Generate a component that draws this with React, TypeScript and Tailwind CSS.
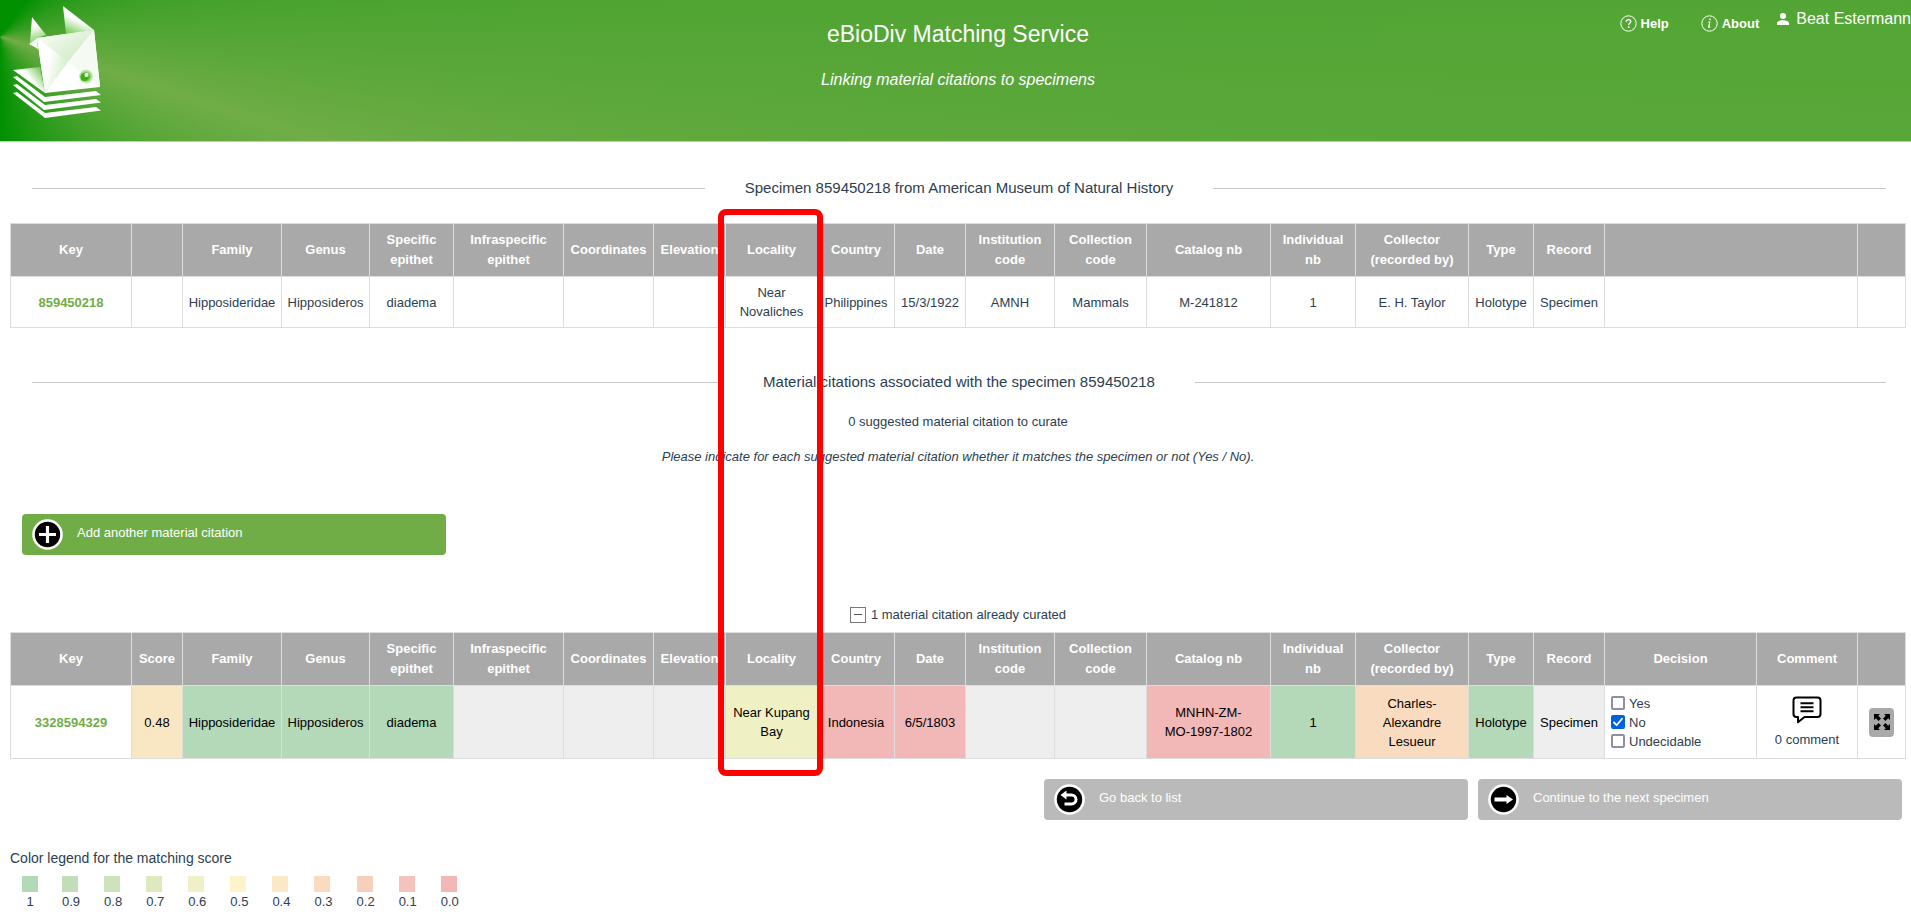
import { useState } from "react";
import type { ReactNode } from "react";

const COLUMN_WIDTHS = [
  121, 51, 99, 88, 84, 110, 90, 72, 92, 77, 71, 89, 92, 124, 85, 113, 65, 71, 152, 101, 48,
];

const SHARED_HEADS = [
  "Family",
  "Genus",
  "Specific epithet",
  "Infraspecific epithet",
  "Coordinates",
  "Elevation",
  "Locality",
  "Country",
  "Date",
  "Institution code",
  "Collection code",
  "Catalog nb",
  "Individual nb",
  "Collector (recorded by)",
  "Type",
  "Record",
];

const SPECIMEN = [
  "Hipposideridae",
  "Hipposideros",
  "diadema",
  "",
  "",
  "",
  "Near Novaliches",
  "Philippines",
  "15/3/1922",
  "AMNH",
  "Mammals",
  "M-241812",
  "1",
  "E. H. Taylor",
  "Holotype",
  "Specimen",
];

const CITATION: { text: string; tone: string }[] = [
  { text: "0.48", tone: "bg-[#f9e7c4]" },
  { text: "Hipposideridae", tone: "bg-[#b3d9b9]" },
  { text: "Hipposideros", tone: "bg-[#b3d9b9]" },
  { text: "diadema", tone: "bg-[#b3d9b9]" },
  { text: "", tone: "bg-[#eeeeee]" },
  { text: "", tone: "bg-[#eeeeee]" },
  { text: "", tone: "bg-[#eeeeee]" },
  { text: "Near Kupang Bay", tone: "bg-[#eff0c4]" },
  { text: "Indonesia", tone: "bg-[#f2b8b7]" },
  { text: "6/5/1803", tone: "bg-[#f2b8b7]" },
  { text: "", tone: "bg-[#eeeeee]" },
  { text: "", tone: "bg-[#eeeeee]" },
  { text: "MNHN-ZM-\nMO-1997-1802", tone: "bg-[#f2b8b7]" },
  { text: "1", tone: "bg-[#b3d9b9]" },
  { text: "Charles-\nAlexandre\nLesueur", tone: "bg-[#f9dcc0]" },
  { text: "Holotype", tone: "bg-[#b3d9b9]" },
  { text: "Specimen", tone: "bg-[#eeeeee]" },
];

const LEGEND = [
  { label: "1", tone: "bg-[#b3d9b9]" },
  { label: "0.9", tone: "bg-[#c1ddb9]" },
  { label: "0.8", tone: "bg-[#cee3ba]" },
  { label: "0.7", tone: "bg-[#dee9bf]" },
  { label: "0.6", tone: "bg-[#eff0c8]" },
  { label: "0.5", tone: "bg-[#fdf5c9]" },
  { label: "0.4", tone: "bg-[#fae8c6]" },
  { label: "0.3", tone: "bg-[#f9dcc0]" },
  { label: "0.2", tone: "bg-[#f7d0bd]" },
  { label: "0.1", tone: "bg-[#f4c4bc]" },
  { label: "0.0", tone: "bg-[#f2b8b7]" },
];

function Logo() {
  return (
    <svg width="110" height="124" viewBox="0 0 110 124" aria-hidden="true">
      <defs>
        <linearGradient id="earLeft" x1="0.3" y1="0" x2="0.5" y2="1">
          <stop offset="0.35" stopColor="#fff" />
          <stop offset="1" stopColor="#7fce5f" />
        </linearGradient>
        <linearGradient id="earRight" x1="0.6" y1="0.3" x2="0.25" y2="1">
          <stop offset="0.3" stopColor="#fff" />
          <stop offset="1" stopColor="#7fce5f" />
        </linearGradient>
        <linearGradient id="faceTop" x1="0" y1="0" x2="0.7" y2="0.6">
          <stop offset="0.3" stopColor="#f3faf0" />
          <stop offset="1" stopColor="#d9efcf" />
        </linearGradient>
        <linearGradient id="faceLeft" x1="0" y1="0.4" x2="0.8" y2="0.75">
          <stop offset="0.4" stopColor="#fff" />
          <stop offset="1" stopColor="#d9efcf" />
        </linearGradient>
        <linearGradient id="sheet" x1="0.2" y1="0.6" x2="0.95" y2="0.1">
          <stop offset="0.4" stopColor="#fff" />
          <stop offset="1" stopColor="#6cc44a" />
        </linearGradient>
        <radialGradient id="eye">
          <stop offset="0.5" stopColor="#5fc232" />
          <stop offset="0.7" stopColor="#a3dc88" />
          <stop offset="1" stopColor="#d5efc8" />
        </radialGradient>
      </defs>
      <path d="M32 17 46 35 37 38 30 43Z" fill="url(#earLeft)" />
      <path d="M63 6 94 30 66 34Z" fill="url(#earRight)" />
      <path d="M29 44 37 38 38 49Z" fill="#f4fbf1" />
      <path d="M13 70 40 67 45 93Z" fill="url(#sheet)" />
      <path d="M37 38 94 30 100 87 45 93Z" fill="#fff" />
      <path d="M37 38 94 30 68 62Z" fill="url(#faceTop)" />
      <path d="M37 38 68 62 45 93Z" fill="url(#faceLeft)" />
      <path d="M94 30 100 87 68 62Z" fill="#f5fbf2" />
      <circle cx="86" cy="76.500" r="7" fill="url(#eye)" />
      <circle cx="84.500" cy="77" r="4" fill="#3fae18" />
      <circle cx="86.500" cy="75" r="2" fill="#fff" />
      <path d="M13 77 17 76 45 97 96 91 101 95 44 102Z" fill="#fff" />
      <path d="M13 85 17 84 45 105 96 99 101 102.500 44 110Z" fill="#fff" />
      <path d="M13 93 17 92 45 113 96 107 101 110.500 45 118Z" fill="#fff" />
    </svg>
  );
}

function HelpIcon() {
  return (
    <svg width="17" height="17" viewBox="0 0 17 17" fill="none" stroke="#fff" aria-hidden="true">
      <circle cx="8.500" cy="8.500" r="7.700" strokeWidth="1" />
      <path d="M6.200 6.800C6.200 5.300 7.200 4.600 8.500 4.600S10.800 5.400 10.800 6.500C10.800 8 8.700 8.100 8.700 10" strokeWidth="1.300" />
      <path d="M8.700 11.300V12.900" strokeWidth="1.500" />
    </svg>
  );
}

function AboutIcon() {
  return (
    <svg width="17" height="17" viewBox="0 0 17 17" fill="none" stroke="#fff" aria-hidden="true">
      <circle cx="8.500" cy="8.500" r="7.700" strokeWidth="1" />
      <path d="M9.200 3.700 8.900 5.200" strokeWidth="1.500" />
      <path d="M7.300 7H8.800L7.700 12.200H9.200" strokeWidth="1.200" />
    </svg>
  );
}

function UserIcon() {
  return (
    <svg width="12" height="12" viewBox="0 0 12 12" fill="#fff" aria-hidden="true">
      <circle cx="6" cy="3" r="3" />
      <path d="M0 12V10.500C0 8.200 3 7.200 6 7.200S12 8.200 12 10.500V12Z" />
    </svg>
  );
}

function Disc({ children }: { children: ReactNode }) {
  return (
    <svg width="31" height="31" viewBox="0 0 31 31" className="shrink-0" aria-hidden="true">
      <circle cx="15.500" cy="15.500" r="15.300" fill="#fff" />
      <circle cx="15.500" cy="15.500" r="12.700" fill="#000" />
      {children}
    </svg>
  );
}

function ActionButton({
  tone,
  icon,
  children,
}: {
  tone: string;
  icon: ReactNode;
  children: ReactNode;
}) {
  return (
    <button
      type="button"
      className={`flex h-[41px] w-[424px] items-center gap-[14px] rounded pl-[10px] text-left text-white ${tone}`}
    >
      <Disc>{icon}</Disc>
      <span className="pb-1">{children}</span>
    </button>
  );
}

function SectionTitle({ children }: { children: ReactNode }) {
  return (
    <div className="flex items-center gap-10 pr-5 pl-[22px]">
      <span className="h-px flex-1 bg-[#c8c8c8]" />
      <h2 className="text-[15px] leading-6">{children}</h2>
      <span className="h-px flex-1 bg-[#c8c8c8]" />
    </div>
  );
}

function Columns({ widths }: { widths: number[] }) {
  return (
    <colgroup>
      {widths.map((width, i) => (
        <col key={i} style={{ width }} />
      ))}
    </colgroup>
  );
}

function HeadRow({ heads }: { heads: string[] }) {
  return (
    <thead>
      <tr className="h-[53px] bg-[#a9a9a9] text-white">
        {heads.map((head, i) => (
          <th key={i} scope="col" className="border border-[#dddddd] px-[5px] leading-5">
            {head}
          </th>
        ))}
      </tr>
    </thead>
  );
}

function SpecimenTable() {
  const widths = [...COLUMN_WIDTHS.slice(0, 18), 253, 48];
  return (
    <table className="w-full table-fixed border-collapse text-center">
      <Columns widths={widths} />
      <HeadRow heads={["Key", "", ...SHARED_HEADS, "", ""]} />
      <tbody>
        <tr className="h-[51px]">
          <td className="border border-[#dddddd]">
            <a href="#specimen" className="font-bold text-[#70ad47]">
              859450218
            </a>
          </td>
          {["", ...SPECIMEN, "", ""].map((text, i) => (
            <td key={i} className="border border-[#dddddd] px-0.5">
              {text}
            </td>
          ))}
        </tr>
      </tbody>
    </table>
  );
}

function CitationTable() {
  const [decision, setDecision] = useState("No");
  return (
    <table className="w-full table-fixed border-collapse text-center">
      <Columns widths={COLUMN_WIDTHS} />
      <HeadRow heads={["Key", "Score", ...SHARED_HEADS, "Decision", "Comment", ""]} />
      <tbody>
        <tr className="h-[73px]">
          <td className="border border-[#dddddd]">
            <a href="#citation" className="font-bold text-[#70ad47]">
              3328594329
            </a>
          </td>
          {CITATION.map(({ text, tone }, i) => (
            <td
              key={i}
              className={`border border-[#dddddd] px-0.5 whitespace-pre-line text-black ${tone}`}
            >
              {text}
            </td>
          ))}
          <td className="border border-[#dddddd] pl-[6px] text-left">
            {["Yes", "No", "Undecidable"].map((option) => (
              <label key={option} className="flex items-center gap-1">
                <input
                  type="checkbox"
                  checked={decision === option}
                  onChange={() => setDecision(option)}
                  className="peer sr-only"
                />
                <span className="flex size-[14px] items-center justify-center rounded-[2px] border-2 border-[#8f8f9d] bg-white peer-checked:border-[#0060df] peer-checked:bg-[#0060df]">
                  {decision === option && (
                    <svg width="10" height="10" viewBox="0 0 10 10" fill="none" stroke="#fff" strokeWidth="1.800" strokeLinecap="round" strokeLinejoin="round" className="shrink-0" aria-hidden="true">
                      <path d="M1 5.500 3.700 8.200 9 1.800" />
                    </svg>
                  )}
                </span>
                {option}
              </label>
            ))}
          </td>
          <td className="border border-[#dddddd]">
            <button type="button" className="inline-flex flex-col items-center gap-1.5 align-middle">
              <svg width="30" height="28" viewBox="0 0 30 28" fill="none" stroke="#000" strokeWidth="2" strokeLinejoin="round" aria-hidden="true">
                <path d="M4.500 1.500H25.500Q28.500 1.500 28.500 4.500V18Q28.500 21 25.500 21H12.500L6 26.300V21H4.500Q1.500 21 1.500 18V4.500Q1.500 1.500 4.500 1.500Z" />
                <path d="M8.500 7.200H21.500M8.500 11.200H21.500M8.500 15.200H21.500" />
              </svg>
              <span>0 comment</span>
            </button>
          </td>
          <td className="border border-[#dddddd]">
            <button
              type="button"
              aria-label="Expand"
              className="inline-flex h-[29px] w-[25px] items-center justify-center rounded bg-[#a9a9a9] align-middle"
            >
              <svg width="16" height="16" viewBox="0 0 16 16" fill="#000" aria-hidden="true">
                <path d="M0 0H6L4.200 1.800 7 4.600 4.600 7 1.800 4.200 0 6Z" />
                <path d="M16 0V6L14.200 4.200 11.400 7 9 4.600 11.800 1.800 10 0Z" />
                <path d="M0 16V10L1.800 11.800 4.600 9 7 11.400 4.200 14.200 6 16Z" />
                <path d="M16 16H10L11.800 14.200 9 11.400 11.400 9 14.200 11.800 16 10Z" />
              </svg>
            </button>
          </td>
        </tr>
      </tbody>
    </table>
  );
}

export default function App() {
  return (
    <div className="relative bg-white font-['Liberation_Sans',Arial,sans-serif] text-[13px] leading-[19px] text-[#2c3e50]">
      <header className="grid h-[142px] grid-cols-[1fr_auto_1fr] items-start border-b border-[#b5d6a0] bg-[conic-gradient(at_0%_26%,#009000_36deg,#70ad47_108deg,#009000_180deg)] text-white">
        <Logo />
        <div className="pt-5 pl-[5px] text-center">
          <h1 className="text-[23px] leading-7">eBioDiv Matching Service</h1>
          <p className="pt-5 text-[16px] leading-6 italic">Linking material citations to specimens</p>
        </div>
        <nav className="flex justify-end">
          <a href="#help" className="flex items-center gap-1 self-start pt-3.5 font-bold">
            <HelpIcon />
            Help
          </a>
          <a href="#about" className="ml-8 flex items-center gap-1 self-start pt-3.5 font-bold">
            <AboutIcon />
            About
          </a>
          <a href="#account" className="ml-[18px] flex items-center gap-[7px] self-start pt-[9px] text-[16px] leading-5">
            <UserIcon />
            Beat Estermann
          </a>
        </nav>
      </header>

      <main className="pr-[5px] pb-1 pl-[10px]">
        <div className="pt-[34px] pb-[23px]">
          <SectionTitle>Specimen 859450218 from American Museum of Natural History</SectionTitle>
        </div>
        <SpecimenTable />

        <div className="pt-[42px] text-center">
          <SectionTitle>Material citations associated with the specimen 859450218</SectionTitle>
          <p className="pt-[18px]">0 suggested material citation to curate</p>
          <p className="pt-4 italic">
            Please indicate for each suggested material citation whether it matches the specimen or
            not (Yes / No).
          </p>
        </div>

        <div className="pt-12 pl-3">
          <ActionButton
            tone="bg-[#70ad47]"
            icon={<path d="M15.500 7V24M7 15.500H24" stroke="#fff" strokeWidth="3.200" fill="none" />}
          >
            Add another material citation
          </ActionButton>
        </div>

        <div className="flex justify-center pt-[50px] pb-2">
          <button type="button" className="flex items-center gap-[5px]">
            <span className="flex size-4 items-center justify-center border border-[#777777]">
              <span className="h-px w-2 bg-[#555555]" />
            </span>
            1 material citation already curated
          </button>
        </div>
        <CitationTable />

        <div className="flex justify-end gap-[10px] pt-5 pr-1">
          <ActionButton
            tone="bg-[#bababa]"
            icon={
              <>
                <path d="M11 11H17.500A4.500 4.500 0 0 1 17.500 20H10.500" stroke="#fff" strokeWidth="3" fill="none" />
                <path d="M6.500 11 12.500 6.500V15.500Z" fill="#fff" />
              </>
            }
          >
            Go back to list
          </ActionButton>
          <ActionButton
            tone="bg-[#bababa]"
            icon={<path d="M6.500 13.500H18.500V11L25 15.500 18.500 20V17.500H6.500Z" fill="#fff" />}
          >
            Continue to the next specimen
          </ActionButton>
        </div>

        <section className="pt-7">
          <h3 className="text-[14px] leading-5">Color legend for the matching score</h3>
          <ul className="flex gap-6 pt-2 pl-3">
            {LEGEND.map(({ label, tone }) => (
              <li key={label} className="min-w-4">
                <div className={`size-4 ${tone}`} />
                <div className="text-center">{label}</div>
              </li>
            ))}
          </ul>
        </section>
      </main>

      <div className="pointer-events-none absolute top-[209px] left-[718px] h-[567px] w-[105px] rounded-lg border-6 border-[#ff0000]" />
    </div>
  );
}
